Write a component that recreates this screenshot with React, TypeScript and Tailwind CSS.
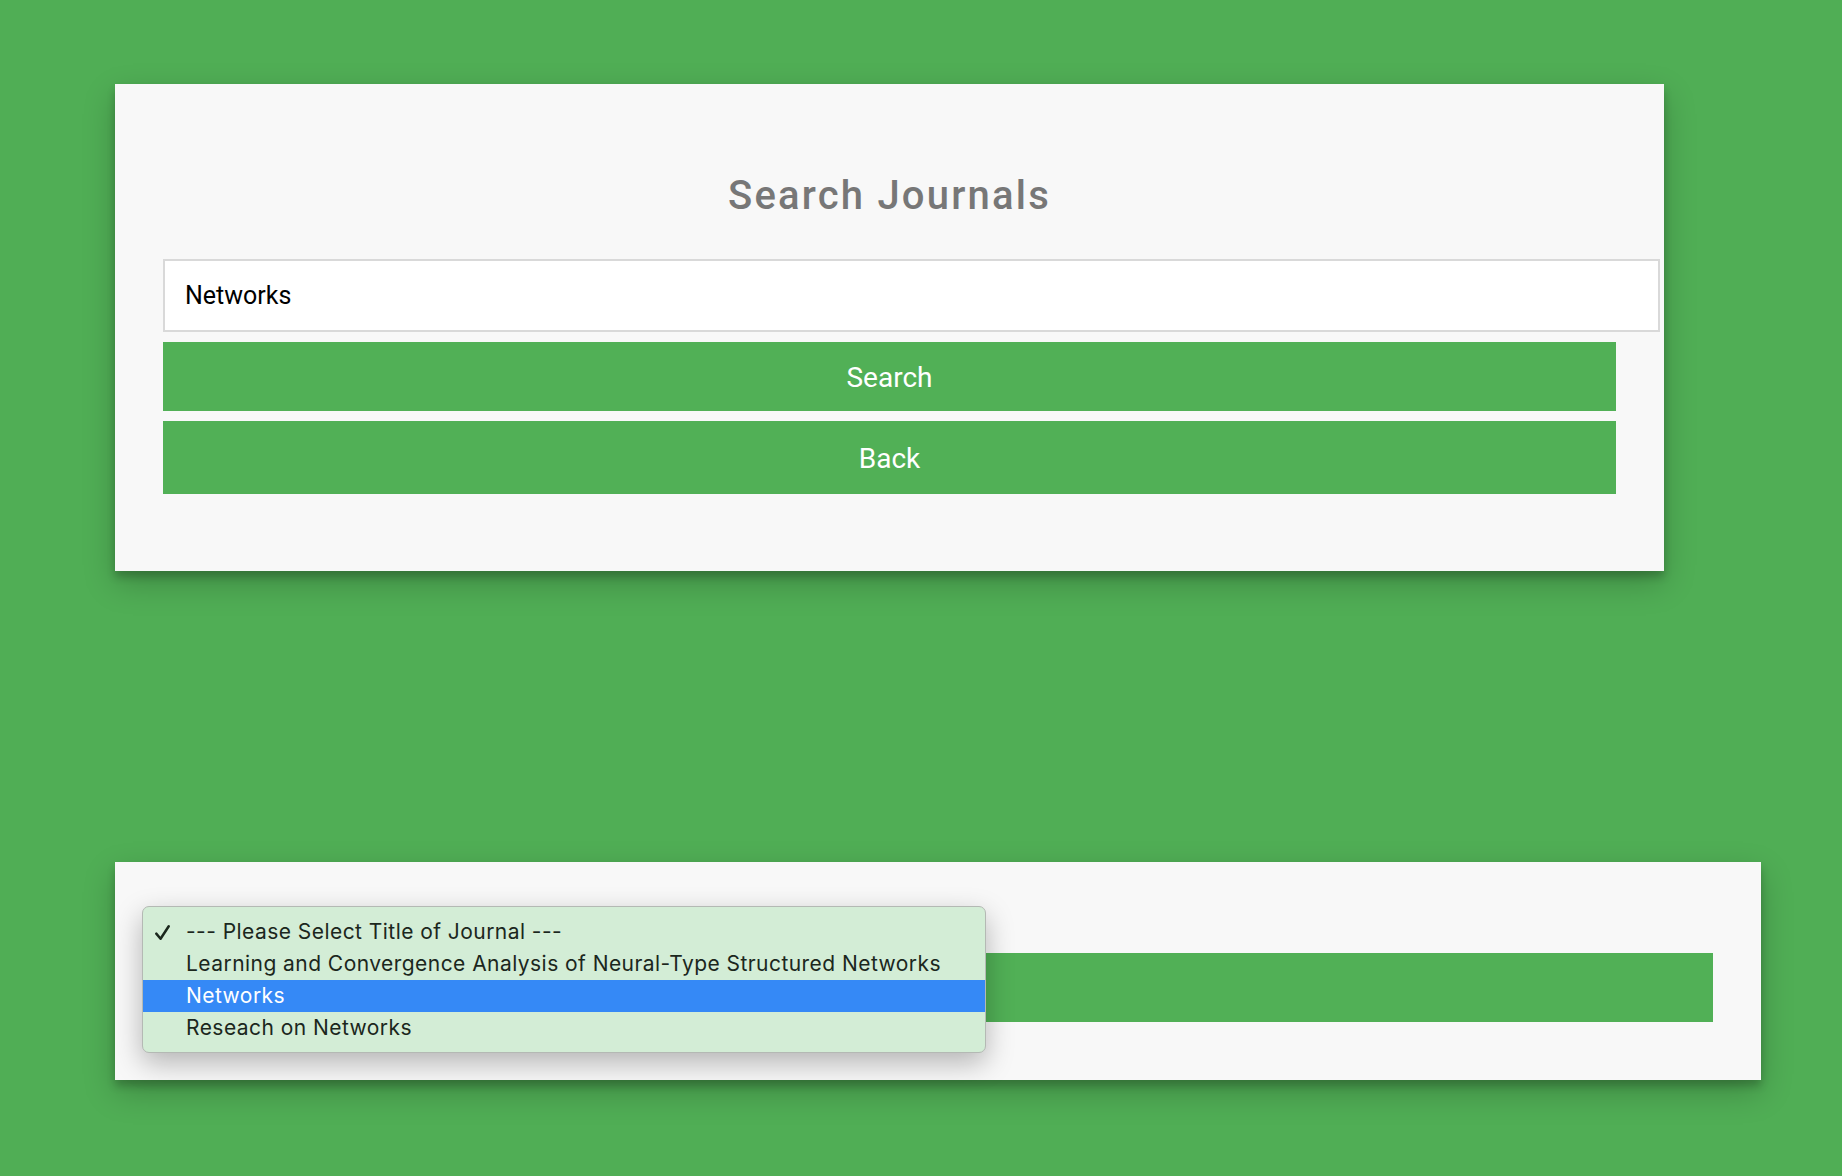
import React from 'react'

const options = [
  '--- Please Select Title of Journal ---',
  'Learning and Convergence Analysis of Neural-Type Structured Networks',
  'Networks',
  'Reseach on Networks',
]

const App = () => {
  const selected = 0
  const hovered = 2

  return (
    <div className="min-h-screen w-full bg-[#50ae55] pt-[84px] pl-[115px] font-['Roboto',sans-serif]">
      {/* Search card */}
      <div className="w-[1549px] bg-[#f8f8f8] px-[48px] pt-[88px] pb-[77px] shadow-[0_12px_30px_rgba(0,0,0,0.22),0_6px_8px_rgba(0,0,0,0.2)]">
        <h2 className="text-center text-[40px] leading-[48px] font-medium tracking-[2.2px] text-[#777777]">
          Search Journals
        </h2>
        <input
          type="text"
          defaultValue="Networks"
          className="mt-[39px] box-content block h-[69px] w-full border-2 border-[#d9d9d9] bg-white px-[20px] text-[25px] text-black outline-none"
        />
        <button className="mt-[10px] block h-[69px] w-full bg-[#51b056] pt-[2px] text-[28px] text-white">
          Search
        </button>
        <button className="mt-[10px] block h-[73px] w-full bg-[#51b056] pt-[3px] text-[28px] text-white">
          Back
        </button>
      </div>

      {/* Select card */}
      <div className="relative mt-[291px] w-[1646px] bg-[#f8f8f8] px-[48px] pt-[48px] pb-[58px] shadow-[0_12px_30px_rgba(0,0,0,0.22),0_6px_8px_rgba(0,0,0,0.2)]">
        <div className="h-[33px]" />
        <div className="mt-[10px] h-[69px] w-full bg-[#51b056]" />

        {/* native select popup */}
        <div className="absolute left-[27px] top-[44px] w-[844px] rounded-[7px] border border-[#b4b9b4] bg-[#d3edd6] pt-[9px] pb-[8px] shadow-[0_10px_28px_rgba(0,0,0,0.28)] font-['Inter',sans-serif] text-[21px] text-[#1b271d]">
          {options.map((opt, i) => (
            <div
              key={opt}
              className={`flex h-[32px] items-center ${i === hovered ? 'bg-[#3589f6] text-white' : ''}`}
            >
              <span className="flex w-[43px] justify-end pr-[15px]">
                {i === selected && (
                  <svg width="17" height="17" viewBox="0 0 15 15" fill="none">
                    <path d="M2 8.5l3.8 4.5L13 2" stroke="#1b271d" strokeWidth="2.2" strokeLinecap="round" strokeLinejoin="round" />
                  </svg>
                )}
              </span>
              <span className="tracking-[0.45px]">{opt}</span>
            </div>
          ))}
        </div>
      </div>
    </div>
  )
}

export default App
